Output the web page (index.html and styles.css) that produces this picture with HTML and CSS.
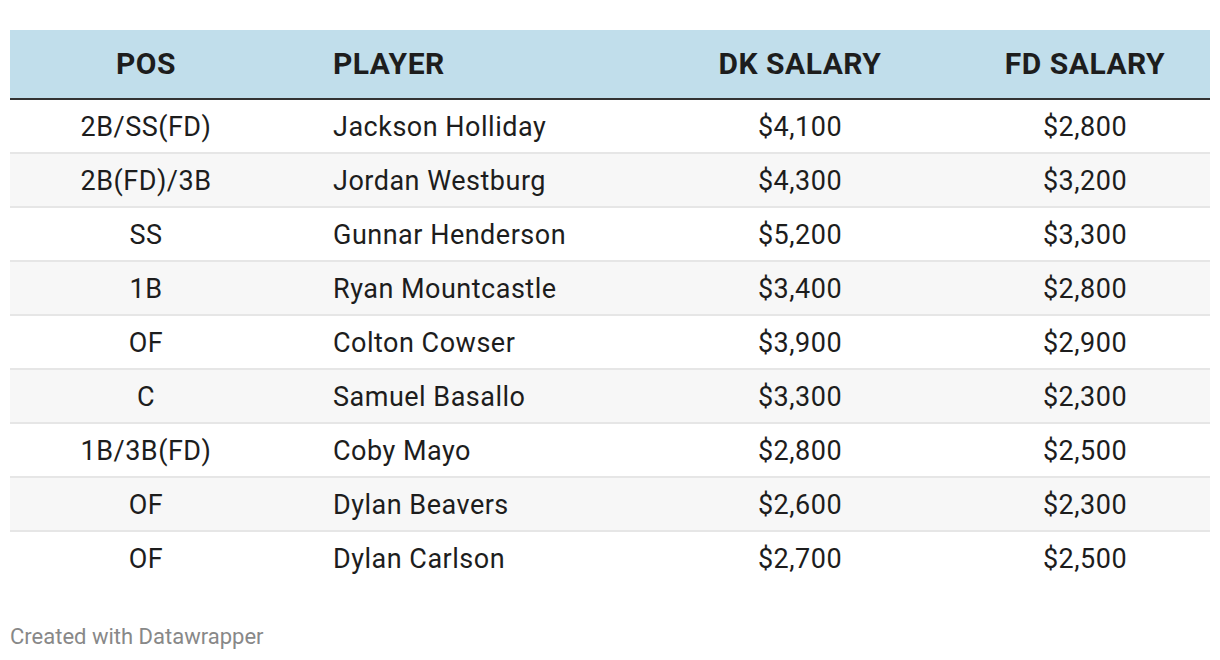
FILE: index.html
```html
<!DOCTYPE html>
<html>
<head>
<meta charset="utf-8">
<link rel="stylesheet" href="styles.css">
</head>
<body>
<div class="wrap">
  <table class="tbl">
    <thead>
      <tr>
        <th class="c-pos">POS</th>
        <th class="c-player">PLAYER</th>
        <th class="c-dk">DK SALARY</th>
        <th class="c-fd">FD SALARY</th>
      </tr>
    </thead>
    <tbody>
      <tr><td class="c-pos">2B/SS(FD)</td><td class="c-player">Jackson Holliday</td><td class="c-dk">$4,100</td><td class="c-fd">$2,800</td></tr>
      <tr><td class="c-pos">2B(FD)/3B</td><td class="c-player">Jordan Westburg</td><td class="c-dk">$4,300</td><td class="c-fd">$3,200</td></tr>
      <tr><td class="c-pos">SS</td><td class="c-player">Gunnar Henderson</td><td class="c-dk">$5,200</td><td class="c-fd">$3,300</td></tr>
      <tr><td class="c-pos">1B</td><td class="c-player">Ryan Mountcastle</td><td class="c-dk">$3,400</td><td class="c-fd">$2,800</td></tr>
      <tr><td class="c-pos">OF</td><td class="c-player">Colton Cowser</td><td class="c-dk">$3,900</td><td class="c-fd">$2,900</td></tr>
      <tr><td class="c-pos">C</td><td class="c-player">Samuel Basallo</td><td class="c-dk">$3,300</td><td class="c-fd">$2,300</td></tr>
      <tr><td class="c-pos">1B/3B(FD)</td><td class="c-player">Coby Mayo</td><td class="c-dk">$2,800</td><td class="c-fd">$2,500</td></tr>
      <tr><td class="c-pos">OF</td><td class="c-player">Dylan Beavers</td><td class="c-dk">$2,600</td><td class="c-fd">$2,300</td></tr>
      <tr><td class="c-pos">OF</td><td class="c-player">Dylan Carlson</td><td class="c-dk">$2,700</td><td class="c-fd">$2,500</td></tr>
    </tbody>
  </table>
  <div class="footer">Created with Datawrapper</div>
</div>
</body>
</html>
```
FILE: styles.css
```css
html, body {
  margin: 0;
  padding: 0;
  background: #ffffff;
}
body {
  font-family: Roboto, "Liberation Sans", sans-serif;
  color: #1d1d1d;
}
.wrap {
  padding: 30px 10px 0 10px;
}
.tbl {
  width: 1200px;
  border-collapse: collapse;
  table-layout: fixed;
}
.tbl th {
  background: #c1deeb;
  height: 67px;
  padding: 0 0 1px 0;
  font-size: 30px;
  letter-spacing: 0.5px;
  font-weight: 700;
  border-bottom: 2px solid #333333;
  color: #1d1d1d;
}
.tbl td {
  height: 51px;
  padding: 1px 0 0 0;
  font-size: 27px;
  letter-spacing: 0.5px;
  font-weight: 400;
  border-bottom: 2px solid #e6e6e6;
}
.tbl tbody tr:nth-child(even) td {
  background: #f7f7f7;
}
.tbl tbody tr:last-child td {
  border-bottom: none;
}
.c-pos { width: 272px; text-align: center; }
.tbl .c-player { width: 307px; text-align: left; padding-left: 51px; }
.c-dk { width: 320px; text-align: center; }
.c-fd { width: 250px; text-align: center; }
.footer {
  margin-top: 40px;
  font-size: 22px;
  color: #888888;
}
```
